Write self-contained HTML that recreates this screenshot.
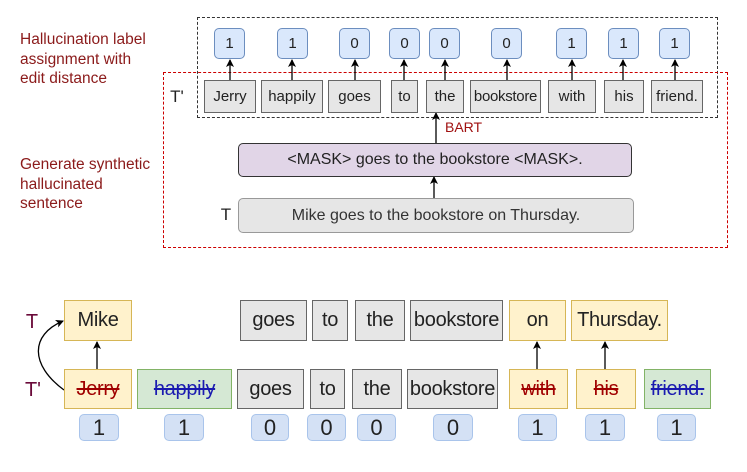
<!DOCTYPE html>
<html><head><meta charset="utf-8"><style>
body{margin:0;width:747px;height:472px;background:#fff;position:relative;overflow:hidden;font-family:"Liberation Sans",sans-serif}
.b{position:absolute;display:flex;align-items:center;justify-content:center;box-sizing:border-box;color:#222}
.g{background:#e6e6e6;border:1px solid #666}
.s{font-size:15px}
.l{background:#dae8fc;border:1px solid #6c8ebf;border-radius:5px;font-size:15px}
.lb{background:#d4e1f5;border:1px solid #a9c4eb;border-radius:5px;font-size:22px}
.y{background:#fff2cc;border:1px solid #d6b656}
.gr{background:#d5e8d4;border:1px solid #82b366}
.L{font-size:20px;letter-spacing:-0.3px}
.t{position:absolute;color:#8b1a1a;font-size:15.5px;line-height:19.5px}
.ry{color:#a00000;text-decoration:line-through}
.bl{color:#1a1ab0;text-decoration:line-through}
</style></head><body>
<div class="t" style="left:20px;top:30px">Hallucination label<br>assignment with<br>edit distance</div>
<div class="t" style="left:20px;top:155px">Generate synthetic<br>hallucinated<br>sentence</div>

<div style="position:absolute;left:197px;top:17px;width:521px;height:101px;border:1px dashed #333;box-sizing:border-box"></div>
<div style="position:absolute;left:163px;top:72px;width:565px;height:176px;border:1px dashed #c00;box-sizing:border-box"></div>

<svg style="position:absolute;left:0;top:0" width="747" height="472">
<defs><marker id="a" markerWidth="8" markerHeight="8" refX="7" refY="4" orient="auto" markerUnits="userSpaceOnUse"><path d="M0,0 L8,4 L0,8 L2,4 z" fill="#000"/></marker></defs>
<g stroke="#000" stroke-width="1.3" fill="none" marker-end="url(#a)">
<line x1="230" y1="80" x2="230" y2="60"/><line x1="292" y1="80" x2="292" y2="60"/><line x1="355" y1="80" x2="355" y2="60"/>
<line x1="404" y1="80" x2="404" y2="60"/><line x1="445" y1="80" x2="445" y2="60"/><line x1="507" y1="80" x2="507" y2="60"/>
<line x1="572" y1="80" x2="572" y2="60"/><line x1="623" y1="80" x2="623" y2="60"/><line x1="675" y1="80" x2="675" y2="60"/>
<line x1="436" y1="143" x2="436" y2="113"/><line x1="434" y1="198" x2="434" y2="177"/>
<line x1="97" y1="369" x2="97" y2="342"/><line x1="537" y1="369" x2="537" y2="342"/><line x1="605" y1="369" x2="605" y2="342"/>
<path d="M64,390 C30,365 30,335 63,321"/>
</g></svg>

<div class="b l" style="left:214px;top:28px;width:31px;height:31px">1</div>
<div class="b l" style="left:277px;top:28px;width:31px;height:31px">1</div>
<div class="b l" style="left:339px;top:28px;width:31px;height:31px">0</div>
<div class="b l" style="left:389px;top:28px;width:31px;height:31px">0</div>
<div class="b l" style="left:429px;top:28px;width:31px;height:31px">0</div>
<div class="b l" style="left:491px;top:28px;width:31px;height:31px">0</div>
<div class="b l" style="left:556px;top:28px;width:31px;height:31px">1</div>
<div class="b l" style="left:608px;top:28px;width:31px;height:31px">1</div>
<div class="b l" style="left:659px;top:28px;width:31px;height:31px">1</div>

<div class="b" style="left:166px;top:86px;width:22px;height:22px;font-size:17px">T'</div>
<div class="b g s" style="left:204px;top:80px;width:52px;height:33px">Jerry</div>
<div class="b g s" style="left:261px;top:80px;width:62px;height:33px">happily</div>
<div class="b g s" style="left:328px;top:80px;width:53px;height:33px">goes</div>
<div class="b g s" style="left:391px;top:80px;width:27px;height:33px">to</div>
<div class="b g s" style="left:426px;top:80px;width:38px;height:33px">the</div>
<div class="b g s" style="left:470px;top:80px;width:71px;height:33px;letter-spacing:-0.3px">bookstore</div>
<div class="b g s" style="left:548px;top:80px;width:48px;height:33px">with</div>
<div class="b g s" style="left:604px;top:80px;width:40px;height:33px">his</div>
<div class="b g s" style="left:651px;top:80px;width:52px;height:33px">friend.</div>

<div style="position:absolute;left:445px;top:119px;color:#a01010;font-size:14px">BART</div>
<div class="b s" style="left:238px;top:143px;width:394px;height:34px;background:#e1d5e7;border:1px solid #333;border-radius:5px;font-size:16px">&lt;MASK&gt; goes to the bookstore &lt;MASK&gt;.</div>
<div class="b" style="left:218px;top:204px;width:16px;height:22px;font-size:17px">T</div>
<div class="b s" style="left:238px;top:198px;width:396px;height:35px;background:#e6e6e6;border:1px solid #999;border-radius:5px;font-size:16px;color:#333">Mike goes to the bookstore on Thursday.</div>

<div class="b" style="left:22px;top:310px;width:20px;height:24px;font-size:20px;color:#6a0a3a">T</div>
<div class="b" style="left:22px;top:378px;width:22px;height:24px;font-size:20px;color:#6a0a3a">T'</div>

<div class="b y L" style="left:64px;top:300px;width:68px;height:41px">Mike</div>
<div class="b g L" style="left:240px;top:300px;width:67px;height:41px">goes</div>
<div class="b g L" style="left:312px;top:300px;width:36px;height:41px">to</div>
<div class="b g L" style="left:355px;top:300px;width:50px;height:41px">the</div>
<div class="b g L" style="left:410px;top:300px;width:93px;height:41px">bookstore</div>
<div class="b y L" style="left:509px;top:300px;width:57px;height:41px">on</div>
<div class="b y L" style="left:571px;top:300px;width:97px;height:41px">Thursday.</div>

<div class="b y L" style="left:64px;top:369px;width:68px;height:40px"><span class="ry">Jerry</span></div>
<div class="b gr L" style="left:137px;top:369px;width:95px;height:40px"><span class="bl">happily</span></div>
<div class="b g L" style="left:237px;top:369px;width:67px;height:40px">goes</div>
<div class="b g L" style="left:310px;top:369px;width:35px;height:40px">to</div>
<div class="b g L" style="left:352px;top:369px;width:50px;height:40px">the</div>
<div class="b g L" style="left:407px;top:369px;width:91px;height:40px">bookstore</div>
<div class="b y L" style="left:509px;top:369px;width:59px;height:40px"><span class="ry">with</span></div>
<div class="b y L" style="left:576px;top:369px;width:60px;height:40px"><span class="ry">his</span></div>
<div class="b gr L" style="left:644px;top:369px;width:67px;height:40px"><span class="bl">friend.</span></div>

<div class="b lb" style="left:79px;top:414px;width:40px;height:27px">1</div>
<div class="b lb" style="left:164px;top:414px;width:40px;height:27px">1</div>
<div class="b lb" style="left:251px;top:414px;width:38px;height:27px">0</div>
<div class="b lb" style="left:307px;top:414px;width:39px;height:27px">0</div>
<div class="b lb" style="left:357px;top:414px;width:39px;height:27px">0</div>
<div class="b lb" style="left:433px;top:414px;width:40px;height:27px">0</div>
<div class="b lb" style="left:518px;top:414px;width:39px;height:27px">1</div>
<div class="b lb" style="left:585px;top:414px;width:40px;height:27px">1</div>
<div class="b lb" style="left:657px;top:414px;width:39px;height:27px">1</div>
</body></html>
